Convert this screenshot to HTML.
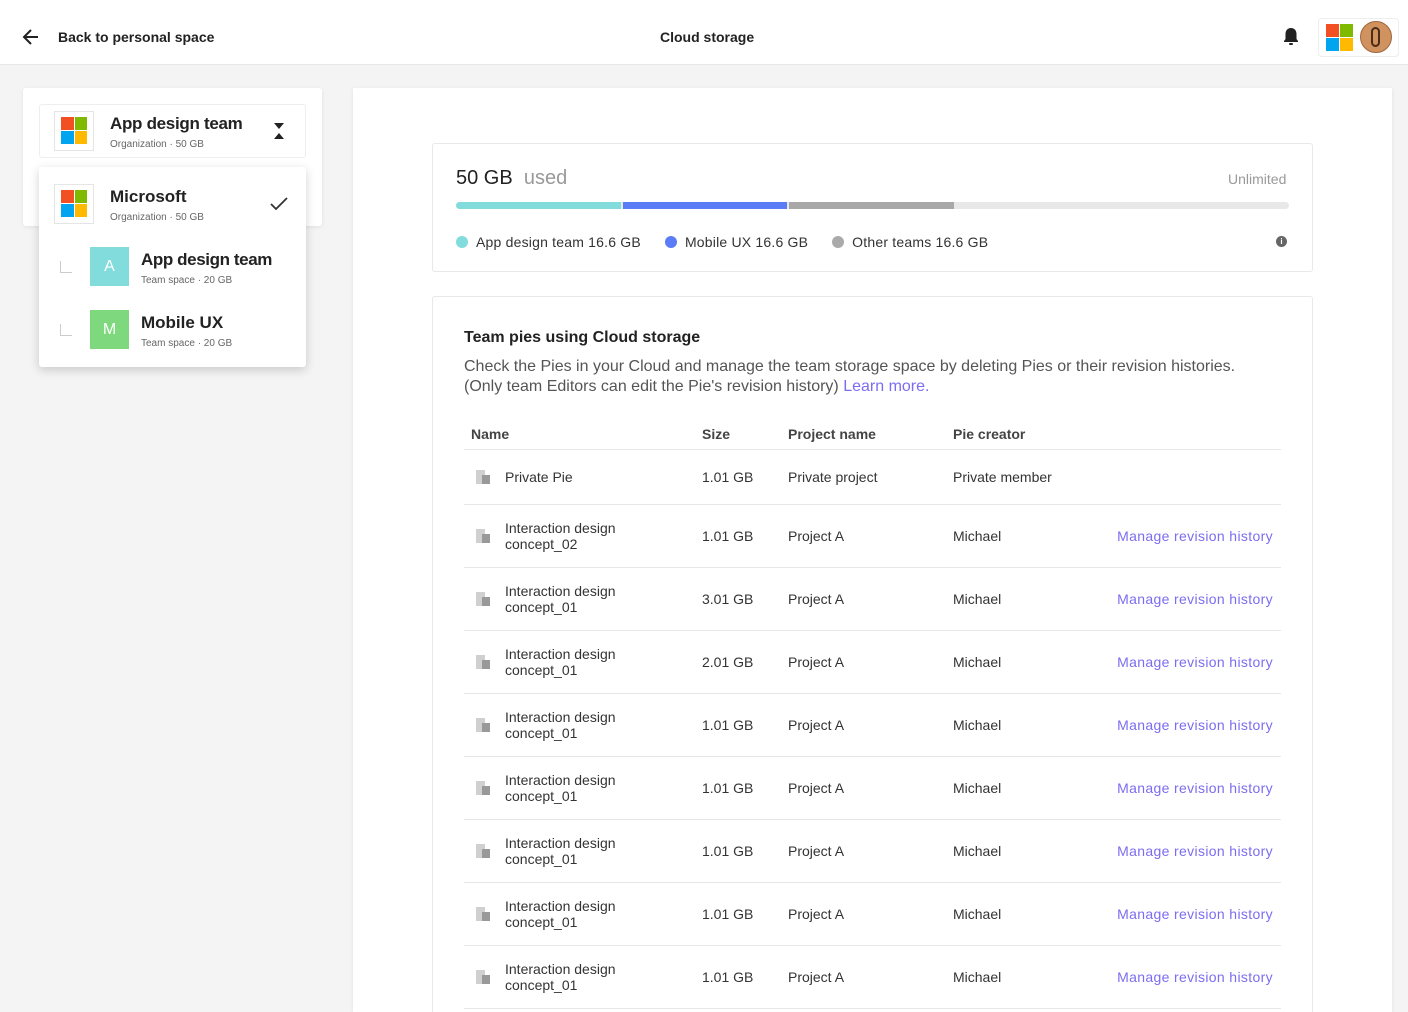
<!DOCTYPE html><html><head><style>
*{box-sizing:border-box;margin:0;padding:0}
html,body{width:1408px;height:1012px;overflow:hidden}
body{background:#f4f4f4;font-family:"Liberation Sans",sans-serif;color:#222;position:relative}
.abs{position:absolute}
.hdr{left:0;top:0;width:1408px;height:65px;background:#fff;border-bottom:1px solid #e8e8e8}
.win{display:grid;grid-template-columns:1fr 1fr;gap:1px}
.win i{display:block}
.row{position:absolute;left:464px;width:817px;border-bottom:1px solid #e6e6e6;font-size:14px;color:#333}
.row span{position:absolute;top:50%;transform:translateY(-50%);line-height:16px}
.ic{left:12px;width:14px;height:14px}
.ic:before{content:"";position:absolute;left:0;top:0;width:9px;height:14px;background:#d0d0d0}
.ic:after{content:"";position:absolute;left:6px;top:5px;width:8px;height:9px;background:#999}
.lk{right:8px;color:#7b6df0;letter-spacing:.35px}
</style></head><body>
<div class="abs hdr"></div>
<svg class="abs" style="left:22px;top:28px" width="18" height="18" viewBox="0 0 18 18"><path d="M16 9H3M9 2L2 9l7 7" fill="none" stroke="#222" stroke-width="2"/></svg>
<div class="abs" style="left:58px;top:29px;font-size:14px;font-weight:bold">Back to personal space</div>
<div class="abs" style="left:660px;top:29px;font-size:14px;font-weight:bold">Cloud storage</div>
<svg class="abs" style="left:1282px;top:27px" width="18" height="20" viewBox="0 0 18 20"><path d="M9 1c-3.5 0-5.5 2.5-5.5 6v5L2 14v1h14v-1l-1.5-2V7C14.5 3.5 12.5 1 9 1z" fill="#222"/><rect x="7" y="16" width="4" height="2" rx="1" fill="#222"/></svg>
<div class="abs" style="left:1318px;top:18px;width:81px;height:39px;border:1px solid #eee;border-radius:4px;background:#fff"></div>
<div class="abs win" style="left:1326px;top:24px;width:27px;height:27px"><i style="background:#f25022"></i><i style="background:#7fba00"></i><i style="background:#00a4ef"></i><i style="background:#ffb900"></i></div>
<div class="abs" style="left:1360px;top:21px;width:32px;height:32px;border-radius:50%;background:#d0925e;border:1px solid #a0653a"></div>
<div class="abs" style="left:1371px;top:27px;width:9px;height:20px;border-radius:5px;border:2px solid #4a2b1a"></div>

<div class="abs" style="left:23px;top:88px;width:299px;height:138px;background:#fff;border-radius:3px;box-shadow:0 1px 4px rgba(0,0,0,.08)"></div>
<div class="abs" style="left:39px;top:104px;width:267px;height:54px;border:1px solid #eee;border-radius:3px"></div>
<div class="abs" style="left:54px;top:111px;width:40px;height:40px;border:1px solid #e5e5e5"></div>
<div class="abs win" style="left:61px;top:117px;width:26px;height:27px"><i style="background:#f25022"></i><i style="background:#7fba00"></i><i style="background:#00a4ef"></i><i style="background:#ffb900"></i></div>
<div class="abs" style="left:110px;top:114px;font-size:17px;font-weight:bold;letter-spacing:-.3px">App design team</div>
<div class="abs" style="left:110px;top:139px;font-size:10px;color:#666">Organization · 50 GB</div>
<svg class="abs" style="left:273px;top:122px" width="12" height="18"><path d="M1 1h10L6 7zM1 17h10L6 11z" fill="#222"/></svg>

<div class="abs" style="left:39px;top:167px;width:267px;height:200px;background:#fff;border-radius:3px;box-shadow:0 3px 10px rgba(0,0,0,.18)"></div>
<div class="abs" style="left:54px;top:184px;width:40px;height:40px;border:1px solid #e5e5e5"></div>
<div class="abs win" style="left:61px;top:190px;width:26px;height:27px"><i style="background:#f25022"></i><i style="background:#7fba00"></i><i style="background:#00a4ef"></i><i style="background:#ffb900"></i></div>
<div class="abs" style="left:110px;top:187px;font-size:17px;font-weight:bold">Microsoft</div>
<div class="abs" style="left:110px;top:212px;font-size:10px;color:#666">Organization · 50 GB</div>
<svg class="abs" style="left:270px;top:197px" width="18" height="14"><path d="M1 7l5 5L17 1" fill="none" stroke="#333" stroke-width="1.8"/></svg>
<div class="abs" style="left:60px;top:261px;width:12px;height:12px;border-left:1px solid #ccc;border-bottom:1px solid #ccc"></div>
<div class="abs" style="left:90px;top:247px;width:39px;height:39px;background:#82dcdc;color:#fff;font-size:16px;text-align:center;line-height:39px">A</div>
<div class="abs" style="left:141px;top:250px;font-size:17px;font-weight:bold;letter-spacing:-.4px">App design team</div>
<div class="abs" style="left:141px;top:275px;font-size:10px;color:#666">Team space · 20 GB</div>
<div class="abs" style="left:60px;top:324px;width:12px;height:12px;border-left:1px solid #ccc;border-bottom:1px solid #ccc"></div>
<div class="abs" style="left:90px;top:310px;width:39px;height:39px;background:#7ed97e;color:#fff;font-size:16px;text-align:center;line-height:39px">M</div>
<div class="abs" style="left:141px;top:313px;font-size:17px;font-weight:bold">Mobile UX</div>
<div class="abs" style="left:141px;top:338px;font-size:10px;color:#666">Team space · 20 GB</div>

<div class="abs" style="left:353px;top:88px;width:1039px;height:924px;background:#fff;box-shadow:0 1px 4px rgba(0,0,0,.08)"></div>
<div class="abs" style="left:432px;top:143px;width:881px;height:129px;border:1px solid #e8e8e8;border-radius:3px"></div>
<div class="abs" style="left:456px;top:167px;font-size:20px">50 GB <span style="color:#999">&nbsp;used</span></div>
<div class="abs" style="left:1228px;top:171px;font-size:14px;color:#999">Unlimited</div>
<div class="abs" style="left:456px;top:202px;width:833px;height:7px;border-radius:4px;background:#e8e8e8;overflow:hidden;display:flex">
<div style="width:165px;background:#82dcdc;margin-right:2px"></div><div style="width:164px;background:#5b7cf7;margin-right:2px"></div><div style="width:165px;background:#a8a8a8"></div></div>
<div class="abs" style="left:456px;top:234px;font-size:14px;display:flex;align-items:center;color:#333;letter-spacing:.2px">
<i style="width:12px;height:12px;border-radius:50%;background:#82dcdc;margin-right:8px"></i>App design team 16.6 GB
<i style="width:12px;height:12px;border-radius:50%;background:#5b7cf7;margin:0 8px 0 24px"></i>Mobile UX 16.6 GB
<i style="width:12px;height:12px;border-radius:50%;background:#aaa;margin:0 8px 0 24px"></i>Other teams 16.6 GB</div>
<div class="abs" style="left:1276px;top:236px;width:11px;height:11px;border-radius:50%;background:#666;color:#fff;font-size:8px;text-align:center;line-height:11px;font-weight:bold">i</div>

<div class="abs" style="left:432px;top:296px;width:881px;height:740px;border:1px solid #e8e8e8;border-radius:3px"></div>
<div class="abs" style="left:464px;top:329px;font-size:16px;font-weight:bold">Team pies using Cloud storage</div>
<div class="abs" style="left:464px;top:357px;width:810px;font-size:16px;line-height:20px;color:#555">Check the Pies in your Cloud and manage the team storage space by deleting Pies or their revision histories. (Only team Editors can edit the Pie's revision history) <span style="color:#7b6df0">Learn more.</span></div>

<div class="row" style="top:419px;height:31px;font-weight:bold;color:#444"><span style="left:7px">Name</span><span style="left:238px">Size</span><span style="left:324px">Project name</span><span style="left:489px">Pie creator</span></div>
<div class="row" style="top:450px;height:55px"><span class="ic"></span><span style="left:41px">Private Pie</span><span style="left:238px">1.01 GB</span><span style="left:324px">Private project</span><span style="left:489px">Private member</span></div>
<script>
var d=[["concept_02","1.01"],["concept_01","3.01"],["concept_01","2.01"],["concept_01","1.01"],["concept_01","1.01"],["concept_01","1.01"],["concept_01","1.01"],["concept_01","1.01"]];
d.forEach(function(r,i){document.write('<div class="row" style="top:'+(505+63*i)+'px;height:63px"><span class="ic"></span><span style="left:41px">Interaction design<br>'+r[0]+'</span><span style="left:238px">'+r[1]+' GB</span><span style="left:324px">Project A</span><span style="left:489px">Michael</span><span class="lk">Manage revision history</span></div>')});
</script>
</body></html>
